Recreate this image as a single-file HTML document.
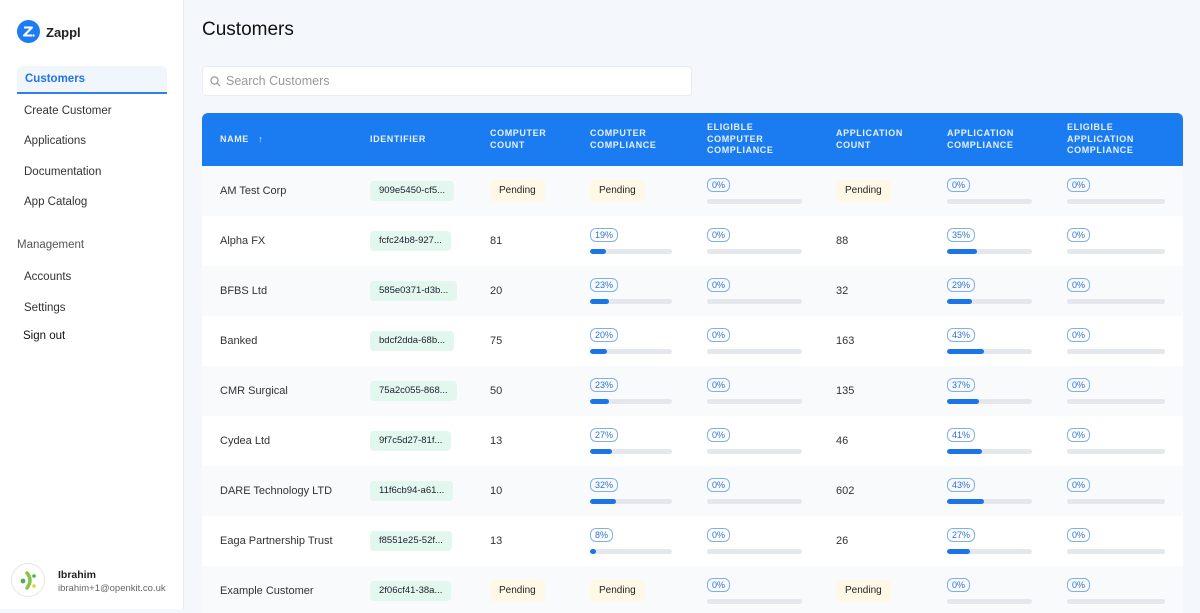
<!DOCTYPE html><html><head><style>
*{box-sizing:border-box;margin:0;padding:0}
body{width:1200px;height:609px;overflow:hidden;font-family:"Liberation Sans",sans-serif;background:#f4f8fd;position:relative;color:#222}
.sb{position:absolute;left:0;top:0;width:184px;height:609px;background:#fff;border-right:1px solid #e6ebf2}
.nav{position:absolute;left:24px;font-size:11.5px;color:#333}
.act{position:absolute;left:17px;top:66px;width:150px;height:28px;background:#f1f6fd;border-bottom:2px solid #2f80ed;border-radius:6px 6px 0 0;color:#1e74e8;font-size:11.5px;padding:7px 0 0 8px;font-weight:bold}
h1{position:absolute;left:202px;top:19px;font-size:19px;font-weight:normal;color:#111}
.search{position:absolute;left:202px;top:66px;width:490px;height:30px;background:#fff;border:1px solid #e8edf3;border-radius:4px;font-size:12.5px;color:#999;padding:7px 0 0 23px}
.tbl{position:absolute;left:202px;top:113px;width:981px;height:500px;background:#fff;border-radius:6px 6px 0 0;overflow:hidden}
.hd{position:absolute;left:0;top:0;width:981px;height:53px;background:#1a7cf0}
.h{position:absolute;color:#e6f0ff;font-size:9px;font-weight:bold;letter-spacing:.6px;line-height:11.5px}
.row{position:absolute;left:0;width:981px;height:50px;font-size:11px}
.row.l{background:#f8fafc}
.row>div{position:absolute}
.nm{left:18px;top:19px;color:#333}
.id{left:168px;top:15px;height:20px;background:#e2f7ee;border-radius:4px;padding:4px 9px;font-size:9.5px;color:#223}
.pd{top:14px;height:22px;background:#fff8e6;border-radius:4px;padding:5px 9px;font-size:10px;color:#222;width:55px}
.num{top:19px;color:#333}
.pc{top:12px}
.pc span{display:inline-block;border:1px solid #7fb0ee;border-radius:6px;font-size:9px;color:#2f6fd0;padding:1px 4px;line-height:10px}
.bar{position:absolute;top:21px;left:0;height:5px;border-radius:3px;background:#e4e7ec;overflow:hidden}
.bar i{display:block;height:5px;background:#1b74e8;border-radius:3px}
</style></head><body>
<div class="sb">
<svg style="position:absolute;left:17px;top:20px" width="23" height="23" viewBox="0 0 23 23"><circle cx="11.5" cy="11.5" r="11.5" fill="#1d7cf2"/><path d="M7 7.5h8l-8 8h8" stroke="#fff" stroke-width="2" fill="none" stroke-linejoin="round"/><circle cx="16.5" cy="15.5" r="1.2" fill="#fff"/></svg>
<div style="position:absolute;left:46px;top:25px;font-size:13px;font-weight:bold;color:#222">Zappl</div>
<div class="act">Customers</div>
<div class="nav" style="top:105px">Create Customer</div>
<div class="nav" style="top:135px">Applications</div>
<div class="nav" style="top:166px">Documentation</div>
<div class="nav" style="top:196px">App Catalog</div>
<div class="nav" style="left:17px;top:239px;color:#555">Management</div>
<div class="nav" style="top:271px">Accounts</div>
<div class="nav" style="top:302px">Settings</div>
<div class="nav" style="left:23px;top:330px;color:#111">Sign out</div>
<div style="position:absolute;left:11px;top:563px;width:34px;height:34px;border-radius:50%;border:1px solid #e5e5e5;background:#fff"></div>
<svg style="position:absolute;left:11px;top:563px" width="34" height="34"><circle cx="12" cy="18" r="2.4" fill="#4caf50"/><path d="M16 10 Q22 17 16 25" stroke="#8bc34a" stroke-width="3.5" fill="none" stroke-linecap="round"/><circle cx="23" cy="13" r="1.8" fill="#4caf50"/><circle cx="23" cy="23" r="1.8" fill="#cddc39"/></svg>
<div style="position:absolute;left:58px;top:569px;font-size:10.5px;font-weight:bold;color:#222">Ibrahim</div>
<div style="position:absolute;left:58px;top:583px;font-size:9.5px;color:#666">ibrahim+1@openkit.co.uk</div>
</div>
<h1>Customers</h1>
<div class="search"><svg style="position:absolute;left:7px;top:9px" width="11" height="11"><circle cx="4.5" cy="4.5" r="3.6" stroke="#999" fill="none" stroke-width="1.2"/><path d="M7.3 7.3L10 10" stroke="#999" stroke-width="1.2"/></svg>Search Customers</div>
<div class="tbl">
<div class="hd">
<div class="h" style="left:18px;top:21px">NAME &nbsp;&nbsp;↑</div>
<div class="h" style="left:168px;top:21px">IDENTIFIER</div>
<div class="h" style="left:288px;top:15px">COMPUTER<br>COUNT</div>
<div class="h" style="left:388px;top:15px">COMPUTER<br>COMPLIANCE</div>
<div class="h" style="left:505px;top:9px">ELIGIBLE<br>COMPUTER<br>COMPLIANCE</div>
<div class="h" style="left:634px;top:15px">APPLICATION<br>COUNT</div>
<div class="h" style="left:745px;top:15px">APPLICATION<br>COMPLIANCE</div>
<div class="h" style="left:865px;top:9px">ELIGIBLE<br>APPLICATION<br>COMPLIANCE</div>
</div>

<div class="row l" style="top:53px"><div class="nm">AM Test Corp</div><div class="id">909e5450-cf5...</div><div class="pd" style="left:288px">Pending</div><div class="pd" style="left:388px">Pending</div><div class="pc" style="left:505px"><span>0%</span><div class="bar" style="width:95px"><i style="width:0"></i></div></div><div class="pd" style="left:634px">Pending</div><div class="pc" style="left:745px"><span>0%</span><div class="bar" style="width:85px"><i style="width:0"></i></div></div><div class="pc" style="left:865px"><span>0%</span><div class="bar" style="width:98px"><i style="width:0"></i></div></div></div>

<div class="row" style="top:103px"><div class="nm">Alpha FX</div><div class="id">fcfc24b8-927...</div><div class="num" style="left:288px">81</div><div class="pc" style="left:388px"><span>19%</span><div class="bar" style="width:82px"><i style="width:16px"></i></div></div><div class="pc" style="left:505px"><span>0%</span><div class="bar" style="width:95px"></div></div><div class="num" style="left:634px">88</div><div class="pc" style="left:745px"><span>35%</span><div class="bar" style="width:85px"><i style="width:30px"></i></div></div><div class="pc" style="left:865px"><span>0%</span><div class="bar" style="width:98px"></div></div></div>

<div class="row l" style="top:153px"><div class="nm">BFBS Ltd</div><div class="id">585e0371-d3b...</div><div class="num" style="left:288px">20</div><div class="pc" style="left:388px"><span>23%</span><div class="bar" style="width:82px"><i style="width:19px"></i></div></div><div class="pc" style="left:505px"><span>0%</span><div class="bar" style="width:95px"></div></div><div class="num" style="left:634px">32</div><div class="pc" style="left:745px"><span>29%</span><div class="bar" style="width:85px"><i style="width:25px"></i></div></div><div class="pc" style="left:865px"><span>0%</span><div class="bar" style="width:98px"></div></div></div>

<div class="row" style="top:203px"><div class="nm">Banked</div><div class="id">bdcf2dda-68b...</div><div class="num" style="left:288px">75</div><div class="pc" style="left:388px"><span>20%</span><div class="bar" style="width:82px"><i style="width:17px"></i></div></div><div class="pc" style="left:505px"><span>0%</span><div class="bar" style="width:95px"></div></div><div class="num" style="left:634px">163</div><div class="pc" style="left:745px"><span>43%</span><div class="bar" style="width:85px"><i style="width:37px"></i></div></div><div class="pc" style="left:865px"><span>0%</span><div class="bar" style="width:98px"></div></div></div>

<div class="row l" style="top:253px"><div class="nm">CMR Surgical</div><div class="id">75a2c055-868...</div><div class="num" style="left:288px">50</div><div class="pc" style="left:388px"><span>23%</span><div class="bar" style="width:82px"><i style="width:19px"></i></div></div><div class="pc" style="left:505px"><span>0%</span><div class="bar" style="width:95px"></div></div><div class="num" style="left:634px">135</div><div class="pc" style="left:745px"><span>37%</span><div class="bar" style="width:85px"><i style="width:32px"></i></div></div><div class="pc" style="left:865px"><span>0%</span><div class="bar" style="width:98px"></div></div></div>

<div class="row" style="top:303px"><div class="nm">Cydea Ltd</div><div class="id">9f7c5d27-81f...</div><div class="num" style="left:288px">13</div><div class="pc" style="left:388px"><span>27%</span><div class="bar" style="width:82px"><i style="width:22px"></i></div></div><div class="pc" style="left:505px"><span>0%</span><div class="bar" style="width:95px"></div></div><div class="num" style="left:634px">46</div><div class="pc" style="left:745px"><span>41%</span><div class="bar" style="width:85px"><i style="width:35px"></i></div></div><div class="pc" style="left:865px"><span>0%</span><div class="bar" style="width:98px"></div></div></div>

<div class="row l" style="top:353px"><div class="nm">DARE Technology LTD</div><div class="id">11f6cb94-a61...</div><div class="num" style="left:288px">10</div><div class="pc" style="left:388px"><span>32%</span><div class="bar" style="width:82px"><i style="width:26px"></i></div></div><div class="pc" style="left:505px"><span>0%</span><div class="bar" style="width:95px"></div></div><div class="num" style="left:634px">602</div><div class="pc" style="left:745px"><span>43%</span><div class="bar" style="width:85px"><i style="width:37px"></i></div></div><div class="pc" style="left:865px"><span>0%</span><div class="bar" style="width:98px"></div></div></div>

<div class="row" style="top:403px"><div class="nm">Eaga Partnership Trust</div><div class="id">f8551e25-52f...</div><div class="num" style="left:288px">13</div><div class="pc" style="left:388px"><span>8%</span><div class="bar" style="width:82px"><i style="width:6px"></i></div></div><div class="pc" style="left:505px"><span>0%</span><div class="bar" style="width:95px"></div></div><div class="num" style="left:634px">26</div><div class="pc" style="left:745px"><span>27%</span><div class="bar" style="width:85px"><i style="width:23px"></i></div></div><div class="pc" style="left:865px"><span>0%</span><div class="bar" style="width:98px"></div></div></div>

<div class="row l" style="top:453px"><div class="nm">Example Customer</div><div class="id">2f06cf41-38a...</div><div class="pd" style="left:288px">Pending</div><div class="pd" style="left:388px">Pending</div><div class="pc" style="left:505px"><span>0%</span><div class="bar" style="width:95px"></div></div><div class="pd" style="left:634px">Pending</div><div class="pc" style="left:745px"><span>0%</span><div class="bar" style="width:85px"></div></div><div class="pc" style="left:865px"><span>0%</span><div class="bar" style="width:98px"></div></div></div>
</div>
</body></html>
